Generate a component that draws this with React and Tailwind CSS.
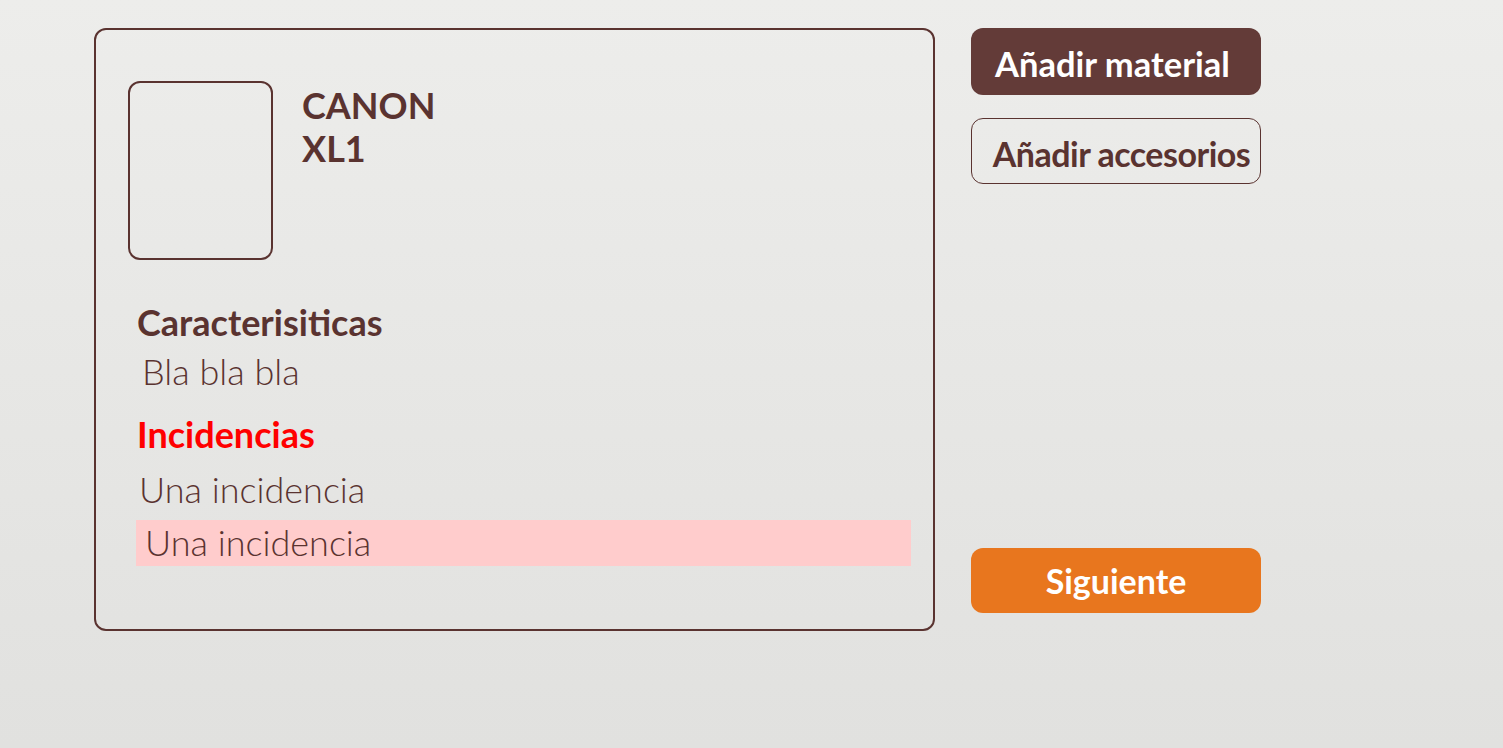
export default function App() {
  return (
    <div
      className="w-[1503px] h-[748px] bg-gradient-to-b from-[#ededeb] to-[#e1e1df] flex items-start pt-[28px] pl-[94px] gap-[36px]"
      style={{ fontFamily: "Lato, 'Open Sans', sans-serif" }}
    >
      <div className="w-[841px] h-[603px] border-2 border-[#5a3330] rounded-[12px] relative">
        <div className="flex pt-[51px] pl-[32px] gap-[29px]">
          <div className="w-[145px] h-[179px] border-2 border-[#5a3330] rounded-[12px] shrink-0" />
          <div className="text-[36px] leading-[43px] font-bold text-[#5a3330] pt-[3px]">
            <div>CANON</div>
            <div>XL1</div>
          </div>
        </div>
        <div className="pl-[41px] pr-[22px] mt-[42px] text-[#5a3330]">
          <div className="text-[36px] leading-[40px] font-bold">Caracterisiticas</div>
          <div className="text-[36px] leading-[40px] font-light pl-[5px] mt-[9px]">Bla bla bla</div>
          <div className="text-[36px] leading-[40px] font-bold text-[#ff0000] mt-[23px]">Incidencias</div>
          <div className="text-[36px] leading-[40px] font-light pl-[2px] mt-[15px]">Una incidencia</div>
          <div className="bg-[#ffcccc] h-[46px] -ml-[1px] mt-[11px] pl-[9px] text-[36px] leading-[44px] font-light">
            Una incidencia
          </div>
        </div>
      </div>
      <div className="w-[290px] flex flex-col">
        <div className="h-[67px] rounded-[12px] bg-[#633b38] text-white font-bold text-[34.5px] flex items-center justify-center pt-[5px] pr-[7px]">
          Añadir material
        </div>
        <div className="h-[66px] mt-[23px] rounded-[12px] border border-[#5a3330] text-[#5a3330] font-bold text-[34px] flex items-center justify-center tracking-[-0.5px] pt-[5px] pl-[11px]">
          Añadir accesorios
        </div>
        <div className="h-[65px] mt-[364px] rounded-[12px] bg-[#e8761e] text-white font-bold text-[34px] flex items-center justify-center">
          Siguiente
        </div>
      </div>
    </div>
  );
}
